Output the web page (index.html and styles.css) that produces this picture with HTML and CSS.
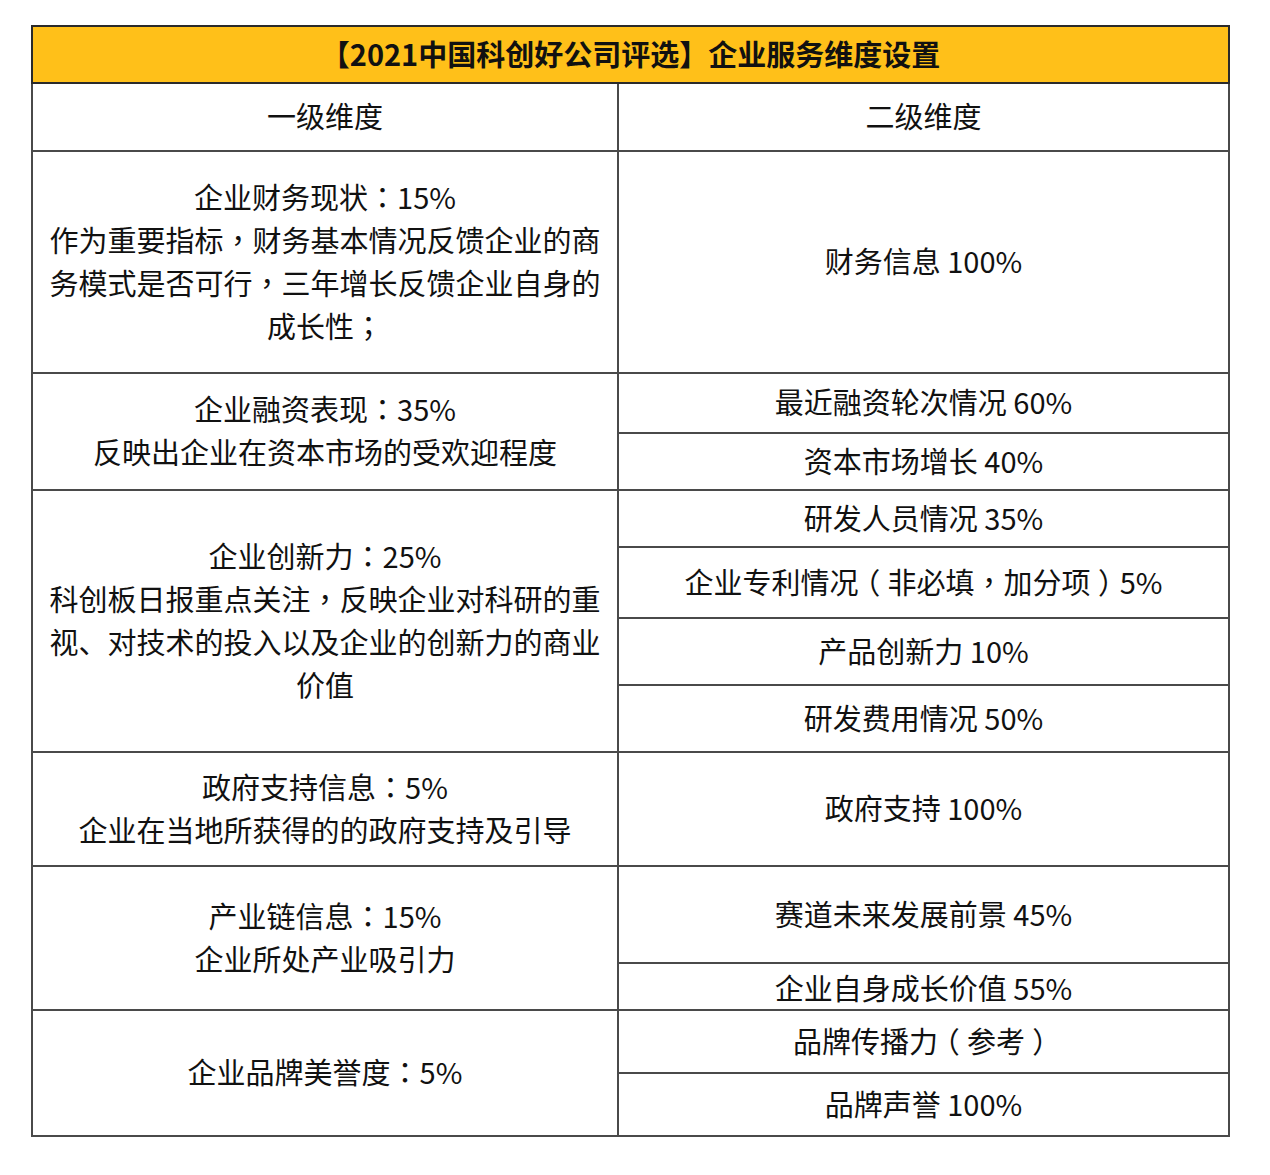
FILE: index.html
```html
<!DOCTYPE html>
<html lang="zh-CN">
<head>
<meta charset="utf-8">
<title>2021中国科创好公司评选</title>
<link rel="stylesheet" href="styles.css">
</head>
<body>
<div class="page">
<table class="grid">
  <colgroup><col class="c1"><col class="c2"></colgroup>
  <tr class="h-title"><th colspan="2" class="title">【2021中国科创好公司评选】企业服务维度设置</th></tr>
  <tr class="h-head"><td>一级维度</td><td>二级维度</td></tr>
  <tr class="h-r1"><td class="left">企业财务现状<span class="p" lang="zh-TW">：</span>15%<br>作为重要指标<span class="p" lang="zh-TW">，</span>财务基本情况反馈企业的商务模式是否可行<span class="p" lang="zh-TW">，</span>三年增长反馈企业自身的成长性<span class="p" lang="zh-TW">；</span></td><td>财务信息 100%</td></tr>
  <tr class="h-r2a"><td rowspan="2" class="left">企业融资表现<span class="p" lang="zh-TW">：</span>35%<br>反映出企业在资本市场的受欢迎程度</td><td>最近融资轮次情况 60%</td></tr>
  <tr class="h-r2b"><td>资本市场增长 40%</td></tr>
  <tr class="h-r3a"><td rowspan="4" class="left">企业创新力<span class="p" lang="zh-TW">：</span>25%<br>科创板日报重点关注<span class="p" lang="zh-TW">，</span>反映企业对科研的重视、对技术的投入以及企业的创新力的商业价值</td><td>研发人员情况 35%</td></tr>
  <tr class="h-r3b"><td>企业专利情况<span class="paren">（</span>非必填<span class="p" lang="zh-TW">，</span>加分项<span class="paren">）</span>5%</td></tr>
  <tr class="h-r3c"><td>产品创新力 10%</td></tr>
  <tr class="h-r3d"><td>研发费用情况 50%</td></tr>
  <tr class="h-r4"><td class="left">政府支持信息<span class="p" lang="zh-TW">：</span>5%<br>企业在当地所获得的的政府支持及引导</td><td>政府支持 100%</td></tr>
  <tr class="h-r5a"><td rowspan="2" class="left">产业链信息<span class="p" lang="zh-TW">：</span>15%<br>企业所处产业吸引力</td><td>赛道未来发展前景 45%</td></tr>
  <tr class="h-r5b"><td class="tight">企业自身成长价值 55%</td></tr>
  <tr class="h-r6a"><td rowspan="2" class="left">企业品牌美誉度<span class="p" lang="zh-TW">：</span>5%</td><td>品牌传播力<span class="paren">（</span>参考<span class="paren">）</span></td></tr>
  <tr class="h-r6b"><td>品牌声誉 100%</td></tr>
</table>
</div>
</body>
</html>
```

FILE: styles.css
```css
html, body {
  margin: 0;
  padding: 0;
  background: #ffffff;
}
.page {
  padding: 25px 0 0 31px;
}
.grid {
  border-collapse: collapse;
  width: 1197px;
  table-layout: fixed;
  font-family: "Noto Sans CJK SC", "Noto Sans", sans-serif;
  font-size: 29px;
  color: #111111;
}
.c1 { width: 586px; }
.c2 { width: 611px; }
.grid th, .grid td {
  border: 2px solid #4a4a4a;
  text-align: center;
  vertical-align: middle;
  padding: 0 14px 3px;
  line-height: 43px;
  font-weight: 400;
}
.grid th.title {
  background: #ffc019;
  font-weight: 700;
  font-size: 29px;
  border-color: #2a2a2a;
}
.grid td.left {
  padding: 0 13px 3px;
}
.grid td.tight {
  padding: 0 14px;
  line-height: 40px;
}
.p {
  font-family: "Noto Sans CJK TC", "Noto Sans CJK SC", sans-serif;
}
.paren {
  font-feature-settings: "halt" 1;
  padding: 0 0.25em;
}
.h-title { height: 57px; }
.h-head { height: 68px; }
.h-r1 { height: 222px; }
.h-r2a { height: 60px; }
.h-r2b { height: 57px; }
.h-r3a { height: 57px; }
.h-r3b { height: 71px; }
.h-r3c { height: 67px; }
.h-r3d { height: 67px; }
.h-r4 { height: 114px; }
.h-r5a { height: 97px; }
.h-r5b { height: 47px; }
.h-r6a { height: 63px; }
.h-r6b { height: 63px; }
```
